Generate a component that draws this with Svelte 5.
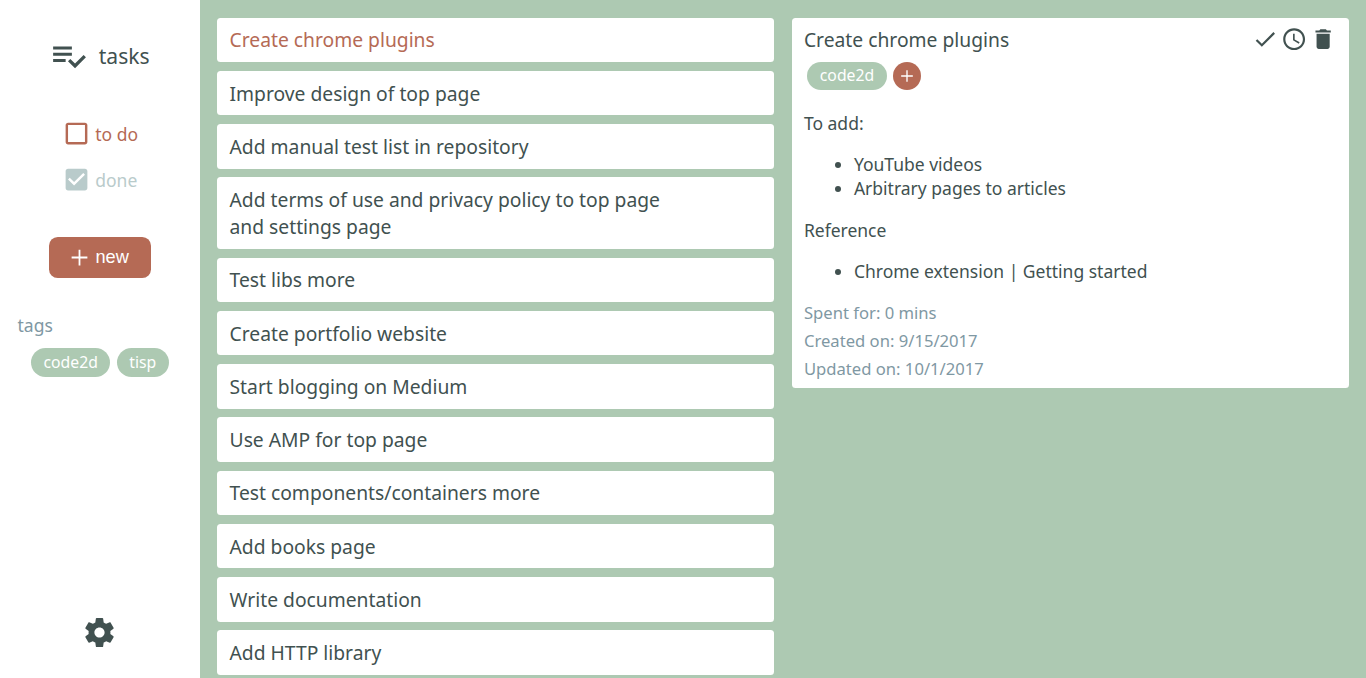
<script>
  const tasks = [
    'Create chrome plugins',
    'Improve design of top page',
    'Add manual test list in repository',
    'Add terms of use and privacy policy to top page and settings page',
    'Test libs more',
    'Create portfolio website',
    'Start blogging on Medium',
    'Use AMP for top page',
    'Test components/containers more',
    'Add books page',
    'Write documentation',
    'Add HTTP library'
  ];
  const tags = ['code2d', 'tisp'];
  let selected = $state(0);

  const paths = {
    tasks: 'M14 10H2v2h12v-2zm0-4H2v2h12V6zM2 16h8v-2H2v2zm19.5-4.5L23 13l-6.99 7-4.51-4.5L13 14l3.01 3 5.49-5.5z',
    todo: 'M19 5v14H5V5h14m0-2H5c-1.1 0-2 .9-2 2v14c0 1.1.9 2 2 2h14c1.1 0 2-.9 2-2V5c0-1.1-.9-2-2-2z',
    done: 'M19 3H5c-1.11 0-2 .9-2 2v14c0 1.1.89 2 2 2h14c1.11 0 2-.9 2-2V5c0-1.1-.89-2-2-2zm-9 14l-5-5 1.41-1.41L10 14.17l7.59-7.59L19 8l-9 9z',
    add: 'M19 12.8h-6.2V19h-1.6v-6.2H5v-1.6h6.2V5h1.6v6.2H19v1.6z',
    check: 'M9 16.17L4.83 12l-1.42 1.41L9 19 21 7l-1.41-1.41z',
    clock: 'M11.99 2C6.47 2 2 6.48 2 12s4.47 10 9.99 10C17.52 22 22 17.52 22 12S17.52 2 11.99 2zM12 20c-4.42 0-8-3.58-8-8s3.58-8 8-8 8 3.58 8 8-3.58 8-8 8zm.5-13H11v6l5.25 3.15.75-1.23-4.5-2.67z',
    trash: 'M6 19c0 1.1.9 2 2 2h8c1.1 0 2-.9 2-2V7H6v12zM19 4h-3.5l-1-1h-5l-1 1H5v2h14V4z',
    gear: 'M19.43 12.98c.04-.32.07-.64.07-.98s-.03-.66-.07-.98l2.11-1.65c.19-.15.24-.42.12-.64l-2-3.46c-.12-.22-.39-.3-.61-.22l-2.49 1c-.52-.4-1.08-.73-1.69-.98l-.38-2.65C14.46 2.18 14.25 2 14 2h-4c-.25 0-.46.18-.49.42l-.38 2.65c-.61.25-1.17.59-1.69.98l-2.49-1c-.23-.09-.49 0-.61.22l-2 3.46c-.13.22-.07.49.12.64l2.11 1.65c-.04.32-.07.65-.07.98s.03.66.07.98l-2.11 1.65c-.19.15-.24.42-.12.64l2 3.46c.12.22.39.3.61.22l2.49-1c.52.4 1.08.73 1.69.98l.38 2.65c.03.24.24.42.49.42h4c.25 0 .46-.18.49-.42l.38-2.65c.61-.25 1.17-.59 1.69-.98l2.49 1c.23.09.49 0 .61-.22l2-3.46c.12-.22.07-.49-.12-.64l-2.11-1.65zM12 15.5c-1.93 0-3.5-1.57-3.5-3.5s1.57-3.5 3.5-3.5 3.5 1.57 3.5 3.5-1.57 3.5-3.5 3.5z'
  };
</script>

{#snippet icon(name)}
  <svg class="icon {name}" viewBox="0 0 24 24" fill="currentColor"><path d={paths[name]} /></svg>
{/snippet}

<div class="app">
  <aside>
    <header>{@render icon('tasks')}<span>tasks</span></header>
    <nav>
      <div class="state active">{@render icon('todo')}<span>to do</span></div>
      <div class="state">{@render icon('done')}<span>done</span></div>
    </nav>
    <button class="new">{@render icon('add')}<span>new</span></button>
    <section class="tags">
      <div class="label">tags</div>
      <div class="chips">
        {#each tags as tag}<span class="chip">{tag}</span>{/each}
      </div>
    </section>
    <footer>{@render icon('gear')}</footer>
  </aside>

  <main>
    <div class="list">
      {#each tasks as task, i}
        <button class="item" class:selected={selected === i} onclick={() => (selected = i)}>
          <span>{task}</span>
        </button>
      {/each}
    </div>
    <div class="column">
      <article>
        <div class="top">
          <h1>Create chrome plugins</h1>
          <div class="actions">
            {@render icon('check')}{@render icon('clock')}{@render icon('trash')}
          </div>
        </div>
        <div class="row">
          <span class="chip">code2d</span>
          <span class="plus">{@render icon('add')}</span>
        </div>
        <div class="body">
          <p>To add:</p>
          <ul>
            <li>YouTube videos</li>
            <li>Arbitrary pages to articles</li>
          </ul>
          <p>Reference</p>
          <ul>
            <li>Chrome extension | Getting started</li>
          </ul>
        </div>
        <div class="meta">
          <div>Spent for: 0 mins</div>
          <div>Created on: 9/15/2017</div>
          <div>Updated on: 10/1/2017</div>
        </div>
      </article>
    </div>
  </main>
</div>

<style>
  :global(html) { font-size: 17.5px; }
  :global(body) { margin: 0; overflow: hidden; }
  .app {
    display: flex;
    height: 100vh;
    overflow: hidden;
    font-family: 'Noto Sans', sans-serif;
    font-size: 17.5px;
    color: #415150;
    background: #adc9b2;
  }
  .icon { display: block; flex: none; width: 1.5rem; height: 1.5rem; }
  aside {
    box-sizing: border-box;
    flex: none;
    width: 199.8px;
    padding: 36.5px 17.5px 28px;
    display: flex;
    flex-direction: column;
    align-items: center;
    background: #fff;
  }
  header { display: flex; align-items: center; gap: 11px; font-size: 21.05px; height: 38px; }
  .icon.tasks { width: 37.5px; height: 37.5px; }
  nav { display: flex; flex-direction: column; gap: 17px; margin-top: 44.5px; }
  .state { display: flex; align-items: center; gap: 4.5px; height: 29px; color: #b9cbcb; }
  .state.active { color: #b56a55; }
  .state .icon { width: 29px; height: 29px; }
  button { font: inherit; border: 0; cursor: pointer; }
  .new {
    box-sizing: border-box;
    display: flex;
    align-items: center;
    gap: 2.6px;
    width: 102px;
    height: 41px;
    margin-top: 42.5px;
    padding: 0 0 0 17px;
    border-radius: 8.75px;
    background: #b56a55;
    color: #fff;
    font-family: 'Liberation Sans', sans-serif;
    font-size: 18.2px;
  }
  .new .icon { width: 27px; height: 27px; }
  .tags { align-self: stretch; margin-top: 35px; }
  .label { color: #7f98a3; line-height: 24px; }
  .chips { display: flex; justify-content: center; gap: 7px; margin-top: 11px; }
  .chip {
    box-sizing: border-box;
    height: 29px;
    line-height: 28px;
    padding: 0 12.25px;
    border-radius: 15px;
    background: #adc9b2;
    color: #fff;
    font-size: 15.75px;
  }
  footer { margin-top: auto; }
  .icon.gear { width: 35px; height: 35px; }
  main { flex: 1; min-width: 0; display: flex; gap: 17.5px; padding: 17.5px 17.5px 0; }
  .list, .column { flex: 1 1 0; min-width: 0; }
  .list { display: flex; flex-direction: column; gap: 8.75px; }
  .item {
    flex: none;
    padding: 8.75px 12.25px;
    border-radius: 3.5px;
    background: #fff;
    color: inherit;
    font-size: 19.27px;
    line-height: 27px;
    text-align: left;
  }
  .item span { display: block; max-width: 450px; }
  .item.selected { color: #b56a55; }
  article { box-sizing: border-box; height: 370px; padding: 8.75px 12.25px; border-radius: 3.5px; background: #fff; }
  .top { display: flex; justify-content: space-between; align-items: center; height: 27px; }
  h1 { margin: 0; font-size: 19.27px; line-height: 27px; font-weight: 400; }
  .actions { display: flex; gap: 2.6px; margin-top: -0.5px; }
  .row { display: flex; gap: 6px; margin: 8.4px 0 0 3.3px; }
  .row .chip { height: 28px; line-height: 27px; padding: 0 12.6px; }
  .plus {
    display: grid;
    place-items: center;
    width: 28px;
    height: 28px;
    border-radius: 50%;
    background: #b56a55;
    color: #fff;
  }
  .plus .icon { width: 20px; height: 20px; }
  .body { margin-top: 21px; line-height: 24px; }
  p { margin: 0 0 17.5px; }
  ul { margin: 0 0 17.5px; padding-left: 50px; }
  .meta { display: flex; flex-direction: column; gap: 5px; color: #7f98a3; font-size: 16.64px; line-height: 23px; }
</style>
